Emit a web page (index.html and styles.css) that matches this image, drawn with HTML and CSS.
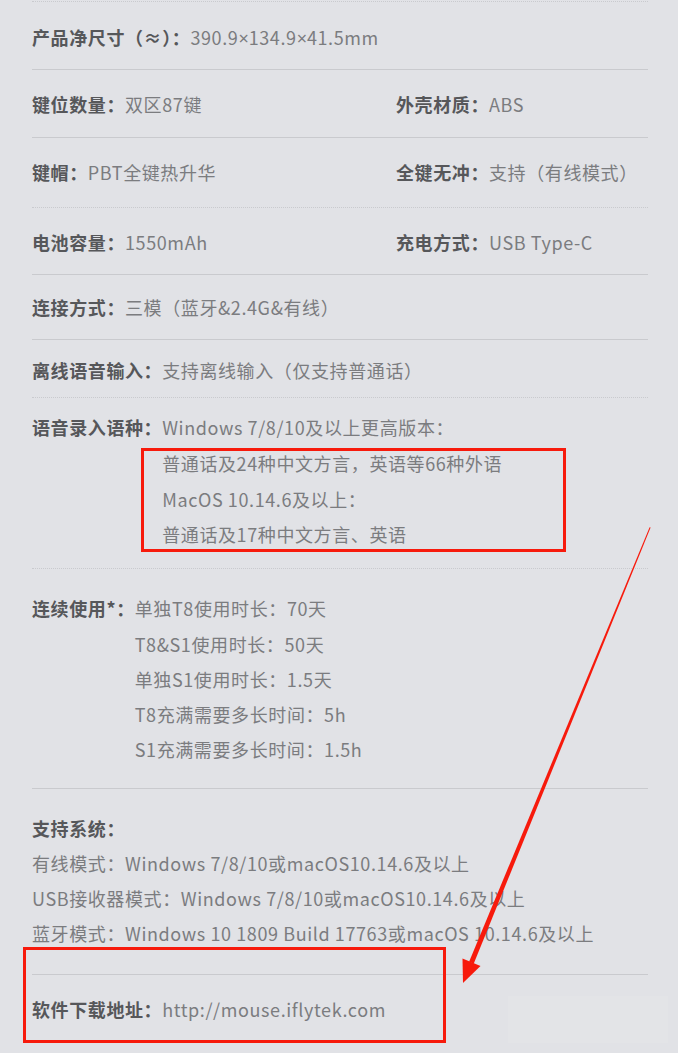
FILE: index.html
```html
<!DOCTYPE html>
<html lang="zh-CN">
<head>
<meta charset="utf-8">
<title>产品参数</title>
<link rel="stylesheet" href="styles.css">
</head>
<body>
<div class="page">
  <div class="specs">
    <div class="row r1 dotted-top">
      <div class="item"><span class="k">产品净尺寸（≈）：</span><span class="v">390.9<span class="times">×</span>134.9<span class="times">×</span>41.5mm</span></div>
    </div>
    <div class="row r2 cols">
      <div class="item"><span class="k">键位数量：</span><span class="v">双区87键</span></div>
      <div class="item"><span class="k">外壳材质：</span><span class="v">ABS</span></div>
    </div>
    <div class="row r3 cols">
      <div class="item"><span class="k">键帽：</span><span class="v">PBT全键热升华</span></div>
      <div class="item"><span class="k">全键无冲：</span><span class="v">支持（有线模式）</span></div>
    </div>
    <div class="row r4 cols dotted-top">
      <div class="item"><span class="k">电池容量：</span><span class="v">1550mAh</span></div>
      <div class="item"><span class="k">充电方式：</span><span class="v">USB Type-C</span></div>
    </div>
    <div class="row r5">
      <div class="item"><span class="k">连接方式：</span><span class="v">三模（蓝牙&amp;2.4G&amp;有线）</span></div>
    </div>
    <div class="row r6">
      <div class="item"><span class="k">离线语音输入：</span><span class="v">支持离线输入（仅支持普通话）</span></div>
    </div>
    <div class="row r7 dotted-top">
      <div class="item multi">
        <span class="k">语音录入语种：</span>
        <div class="lines v">
          <span>Windows 7/8/10及以上更高版本：</span>
          <span>普通话及24种中文方言，英语等66种外语</span>
          <span>MacOS 10.14.6及以上：</span>
          <span>普通话及17种中文方言、英语</span>
        </div>
      </div>
    </div>
    <div class="row r8 dotted-top">
      <div class="item multi">
        <span class="k">连续使用*：</span>
        <div class="lines v">
          <span>单独T8使用时长：70天</span>
          <span>T8&amp;S1使用时长：50天</span>
          <span>单独S1使用时长：1.5天</span>
          <span>T8充满需要多长时间：5h</span>
          <span>S1充满需要多长时间：1.5h</span>
        </div>
      </div>
    </div>
    <div class="row r9">
      <div class="lines">
        <span class="k">支持系统：</span>
        <span class="v">有线模式：Windows 7/8/10或macOS10.14.6及以上</span>
        <span class="v">USB接收器模式：Windows 7/8/10或macOS10.14.6及以上</span>
        <span class="v">蓝牙模式：Windows 10 1809 Build 17763或macOS 10.14.6及以上</span>
      </div>
    </div>
    <div class="row r10">
      <div class="item"><span class="k">软件下载地址：</span><span class="v">http://mouse.iflytek.com</span></div>
    </div>
  </div>

  <svg class="marks" width="678" height="1053" viewBox="0 0 678 1053" aria-hidden="true">
    <rect x="508" y="996" width="160" height="47" fill="#ffffff" opacity="0.07"/>
    <rect x="142.5" y="449.5" width="422" height="101" fill="none" stroke="#f71a0c" stroke-width="3"/>
    <rect x="24.5" y="948.5" width="420" height="93" fill="none" stroke="#f71a0c" stroke-width="3"/>
    <polygon points="650.6,527.6 649.6,527.3 469.1,961.8 473.7,963.7" fill="#f71a0c"/>
    <polygon points="463,983 462.5,958.5 480.5,966" fill="#f71a0c"/>
  </svg>
</div>
</body>
</html>
```

FILE: styles.css
```css
html, body {
  margin: 0;
  padding: 0;
  background: #e1e2e6;
}

.page {
  position: relative;
  width: 678px;
  height: 1053px;
  overflow: hidden;
  font-family: "Noto Sans CJK SC", "Noto Sans", sans-serif;
  font-size: 18px;
  letter-spacing: 0.6px;
  line-height: 36px;
}

.specs {
  padding: 1px 30px 0 32px;
}

.row {
  border-top: 1px solid #c9cace;
}

.row.dotted-top {
  border-top-style: dotted;
}

.cols {
  display: grid;
  grid-template-columns: 364px 1fr;
}

.item {
  display: flex;
  white-space: nowrap;
}

.k {
  color: #56575a;
  font-weight: 700;
}

.v {
  color: #7b7c7f;
}

.times {
  font-family: "Noto Sans", sans-serif;
  letter-spacing: 0;
  line-height: 0;
}

.lines {
  display: flex;
  flex-direction: column;
  white-space: nowrap;
}

.multi {
  align-items: flex-start;
}

.r1 { padding: 17px 0 14px; }
.r2 { padding: 15.5px 0 15.5px; }
.r3 { padding: 16px 0 17px; }
.r4 { padding: 16px 0 14px; }
.r5 { padding: 14px 0 14px; }
.r6 { padding: 12px 0 9px; }
.r7 { padding: 12.2px 0 15.1px; line-height: 35.67px; }
.r8 { padding: 22.4px 0 20.35px; line-height: 35.25px; }
.r9 { padding: 22.5px 0 22.5px; line-height: 35px; }
.r10 { padding: 16px 0 0; }

.marks {
  position: absolute;
  left: 0;
  top: 0;
  pointer-events: none;
}
```
